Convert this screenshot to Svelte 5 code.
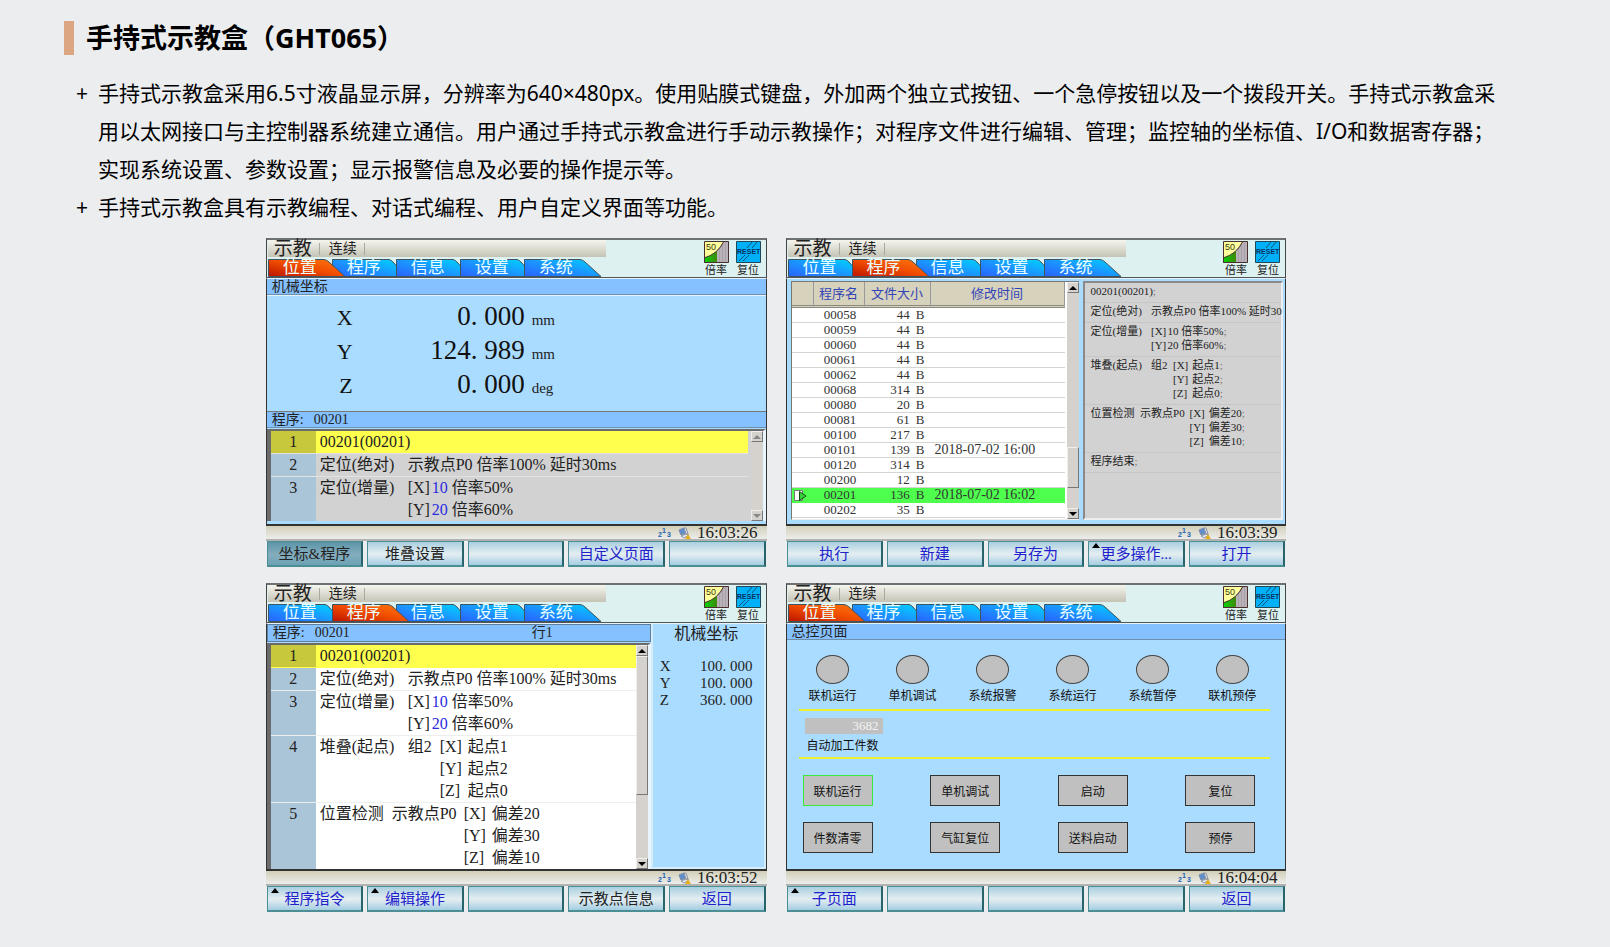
<script lang="ts">
	const tabs = ['位置', '程序', '信息', '设置', '系统'];

	const axes = [
		{ name: 'X', whole: '0', frac: '000', unit: 'mm' },
		{ name: 'Y', whole: '124', frac: '989', unit: 'mm' },
		{ name: 'Z', whole: '0', frac: '000', unit: 'deg' }
	];

	const position = [
		{ name: 'X', whole: '100', frac: '000' },
		{ name: 'Y', whole: '100', frac: '000' },
		{ name: 'Z', whole: '360', frac: '000' }
	];

	// cells: [text, width in half characters]
	type Param = { axis?: string; num?: string; text: string };
	type Line = { cells: [string, number][]; params: Param[]; open?: boolean };
	const program: Line[] = [
		{ cells: [], params: [{ text: '00201(00201)' }] },
		{ cells: [['定位(绝对)', 11]], params: [{ text: '示教点P0 倍率100% 延时30ms' }] },
		{
			cells: [['定位(增量)', 11]],
			params: [
				{ axis: '[X]', num: '10', text: ' 倍率50%' },
				{ axis: '[Y]', num: '20', text: ' 倍率60%' }
			]
		},
		{
			cells: [['堆叠(起点)', 11], ['组2', 4]],
			params: [
				{ axis: '[X]', text: ' 起点1' },
				{ axis: '[Y]', text: ' 起点2' },
				{ axis: '[Z]', text: ' 起点0' }
			]
		},
		{
			cells: [['位置检测', 9], ['示教点P0', 9]],
			params: [
				{ axis: '[X]', text: ' 偏差20' },
				{ axis: '[Y]', text: ' 偏差30' },
				{ axis: '[Z]', text: ' 偏差10' }
			]
		}
	];
	// the preview pane is narrow, its second line stops early
	const preview: Line[] = [
		program[0],
		{ cells: [['定位(绝对)', 11]], params: [{ text: '示教点P0 倍率100% 延时30' }], open: true },
		...program.slice(2),
		{ cells: [], params: [{ text: '程序结束' }] }
	];

	const files = [
		['00058', '44', ''],
		['00059', '44', ''],
		['00060', '44', ''],
		['00061', '44', ''],
		['00062', '44', ''],
		['00068', '314', ''],
		['00080', '20', ''],
		['00081', '61', ''],
		['00100', '217', ''],
		['00101', '139', '2018-07-02 16:00'],
		['00120', '314', ''],
		['00200', '12', ''],
		['00201', '136', '2018-07-02 16:02'],
		['00202', '35', '']
	];
	const current = '00201';

	const lamps = ['联机运行', '单机调试', '系统报警', '系统运行', '系统暂停', '联机预停'];
	const actions = ['联机运行', '单机调试', '启动', '复位', '件数清零', '气缸复位', '送料启动', '预停'];

	type Key = { text: string; dark?: boolean; on?: boolean; more?: boolean };
	const blank: Key = { text: '' };
	const keys1: Key[] = [{ text: '坐标&程序', dark: true, on: true }, { text: '堆叠设置', dark: true }, blank, { text: '自定义页面' }, blank];
	const keys2: Key[] = [{ text: '执行' }, { text: '新建' }, { text: '另存为' }, { text: '更多操作...', more: true }, { text: '打开' }];
	const keys3: Key[] = [{ text: '程序指令', more: true }, { text: '编辑操作', more: true }, blank, { text: '示教点信息', dark: true }, { text: '返回' }];
	const keys4: Key[] = [{ text: '子页面', more: true }, blank, blank, blank, { text: '返回' }];
</script>

{#snippet head(active: number)}
	<header class="head">
		<div class="head-main">
			<div class="mode">
				<b>示教</b><i></i><span>连续</span><i></i>
			</div>
			<nav class="tabs">
				{#each tabs as tab, i}
					<button class="tab" class:active={i === active}>
						<svg width="78" height="18" viewBox="0 0 78 18" aria-hidden="true">
							<path
								fill={i === active ? 'url(#tab-on)' : 'url(#tab-off)'}
								d={i === active || i === 4 ? 'M.5 17.5V.5H56Q59 1 61 3L77 17.5Z' : 'M.5 17.5V.5H57Q59 1 61 3L64.500 7V17.5Z'}
							/>
						</svg>
						<span>{tab}</span>
					</button>
				{/each}
			</nav>
		</div>
		<button class="tool">
			<svg width="25" height="22" viewBox="0 0 25 22" aria-hidden="true">
				<path fill="#ffff9c" d="M0 0h25v22H0z" />
				<path fill="url(#rate)" d="M0 17Q14 13 20 0H25V22H0Z" />
				<path fill="#b9b2b8" d="M13 9Q17 5 20 0H25V22H13Z" />
				<path stroke="#9d959c" stroke-opacity="0.6" d="M15.500 7v15M18.500 3v19M21.500 0v22" />
				<path fill="none" stroke="#4a2f2c" d="M0 17Q14 13 20 0M.5 .5h24v21H.5z" />
				<text x="2" y="9" font-size="9">50</text>
			</svg>
			倍率
		</button>
		<button class="tool">
			<svg width="25" height="22" viewBox="0 0 25 22" aria-hidden="true">
				<path fill="#00b0f8" stroke="#1e4858" d="M.5 .5h24v21H.5z" />
				<path fill="none" stroke="#123c5c" stroke-width="0.8" d="M16 1L11 7M21 1L16 7M9 14L3 20M13 14L7 20" />
				<text class="reset" x="1" y="13" font-size="7">RESET</text>
			</svg>
			复位
		</button>
	</header>
{/snippet}

{#snippet foot(time: string, keys: Key[])}
	<div class="status">
		<svg width="14" height="13" viewBox="0 0 14 13" aria-hidden="true">
			<g fill="#1d5fb4" font-size="7" font-weight="bold">
				<text x="0" y="11">2</text><text x="4" y="7">1</text><text x="9" y="11">3</text>
			</g>
		</svg>
		<svg width="13" height="12" viewBox="0 0 13 12" aria-hidden="true">
			<path fill="#5d8fd0" stroke="#7b8ba5" d="M1 3L6 1L8 6L3 8Z" />
			<path fill="#dfe6f2" stroke="#8b93a3" d="M6 1L8 1L10 7L8 7ZM3 9L8 7L11 8L6 11Z" />
			<path fill="#e8b020" d="M10 7L13 12H7Z" />
		</svg>
		<time>{time}</time>
	</div>
	<div class="keys">
		{#each keys as key}
			<button class="key" class:on={key.on} class:dark={key.dark} class:more={key.more} aria-label={key.text || '空白键'}>{key.text}</button>
		{/each}
	</div>
{/snippet}

{#snippet scrollbar(kind: string)}
	<div class="scroll {kind}">
		<button aria-label="向上"><svg width="8" height="4" viewBox="0 0 8 4"><path d="M0 4L4 0L8 4Z" /></svg></button>
		<div class="track"><div class="thumb"></div></div>
		<button aria-label="向下"><svg width="8" height="4" viewBox="0 0 8 4"><path d="M0 0L4 4L8 0Z" /></svg></button>
	</div>
{/snippet}

{#snippet code(line: Line, end: string)}
	<div class="code">
		{#each line.cells as [text, width]}
			<span style:min-width="{width}ch">{text}</span>
		{/each}
		<div>
			{#each line.params as p}
				<p>{#if p.axis}<span class="axis">{p.axis}</span>{/if}{#if p.num}<em>{p.num}</em>{/if}{p.text}<s>{line.open ? '' : end}</s></p>
			{/each}
		</div>
	</div>
{/snippet}

{#snippet listing(lines: Line[])}
	<ol class="listing">
		{#each lines as line, i}
			<li class:current={i === 0}>
				<span class="no">{i + 1}</span>
				{@render code(line, '')}
			</li>
		{/each}
	</ol>
{/snippet}

<svg class="defs" width="0" height="0" aria-hidden="true">
	<defs>
		<linearGradient id="tab-off" x1="0" y1="1" x2="1" y2="0">
			<stop offset="0" stop-color="#2a62ff" />
			<stop offset="0.5" stop-color="#1a96ff" />
			<stop offset="1" stop-color="#00d2ff" />
		</linearGradient>
		<linearGradient id="tab-on" x1="0" y1="1" x2="1" y2="0">
			<stop offset="0" stop-color="#bc1400" />
			<stop offset="0.5" stop-color="#f04c00" />
			<stop offset="1" stop-color="#ff7a10" />
		</linearGradient>
		<linearGradient id="rate">
			<stop offset="0" stop-color="#00d800" />
			<stop offset="0.6" stop-color="#4a7c10" />
		</linearGradient>
	</defs>
</svg>

<main>
	<h1>手持式示教盒（GHT065）</h1>

	<ul class="intro">
		<li>
			手持式示教盒采用6.5寸液晶显示屏，分辨率为640×480px。使用贴膜式键盘，外加两个独立式按钮、一个急停按钮以及一个拨段开关。手持式示教盒采<br />
			用以太网接口与主控制器系统建立通信。用户通过手持式示教盒进行手动示教操作；对程序文件进行编辑、管理；监控轴的坐标值、I/O和数据寄存器；<br />
			实现系统设置、参数设置；显示报警信息及必要的操作提示等。
		</li>
		<li>手持式示教盒具有示教编程、对话式编程、用户自定义界面等功能。</li>
	</ul>

	<div class="screens">
		<section class="screen">
			{@render head(0)}
			<div class="body">
				<div class="bar">机械坐标</div>
				<div class="axes">
					{#each axes as a}
						<div class="axis-row">
							<span class="name">{a.name}</span>
							<span class="value">{a.whole}<i class="dot">.</i>{a.frac}</span>
							<span class="unit">{a.unit}</span>
						</div>
					{/each}
				</div>
				<div class="bar"><span class="bar-label">程序:</span>00201</div>
				<div class="list-box idle">
					{@render listing(program.slice(0, 3))}
					{@render scrollbar('off gap')}
				</div>
			</div>
			{@render foot('16:03:26', keys1)}
		</section>

		<section class="screen">
			{@render head(1)}
			<div class="body files">
				<div class="file-box">
					<table>
						<thead>
							<tr><th class="mark"></th><th class="id">程序名</th><th class="size">文件大小</th><th>修改时间</th></tr>
						</thead>
						<tbody>
							{#each files as [id, size, time]}
								<tr class:selected={id === current}>
									<td class="mark">
										{#if id === current}
											<svg width="13" height="11" viewBox="0 0 13 11" aria-hidden="true">
												<path fill="#fff" stroke="#777" d="M.5 .5H8.500V10.500H.5Z" />
												<path fill="#35d035" stroke="#144d14" d="M5.500 1.500L12 6L5.500 10.500Z" />
											</svg>
										{/if}
									</td>
									<td class="id">{id}</td>
									<td class="size">{size}<span>B</span></td>
									<td class="time">{time}</td>
								</tr>
							{/each}
						</tbody>
					</table>
					{@render scrollbar('low')}
				</div>
				<div class="preview">
					{#each preview as line}
						{@render code(line, ';')}
					{/each}
				</div>
			</div>
			{@render foot('16:03:39', keys2)}
		</section>

		<section class="screen">
			{@render head(1)}
			<div class="body split">
				<div class="edit">
					<div class="bar"><span class="bar-label">程序:</span>00201<span class="row-no">行1</span></div>
					<div class="list-box">
						{@render listing(program)}
						{@render scrollbar('high')}
					</div>
				</div>
				<aside>
					<h2>机械坐标</h2>
					{#each position as p}
						<div class="pos"><span>{p.name}</span><span>{p.whole}<i class="dot">.</i>{p.frac}</span></div>
					{/each}
				</aside>
			</div>
			{@render foot('16:03:52', keys3)}
		</section>

		<section class="screen">
			{@render head(0)}
			<div class="body">
				<div class="bar">总控页面</div>
				<div class="control">
					<div class="lamps">
						{#each lamps as lamp}
							<div class="lamp"><i></i>{lamp}</div>
						{/each}
					</div>
					<div class="counter">
						<input id="count" value="3682" readonly />
						<label for="count">自动加工件数</label>
					</div>
					<div class="actions">
						{#each actions as action, i}
							<button class:lit={i === 0}>{action}</button>
						{/each}
					</div>
				</div>
			</div>
			{@render foot('16:04:04', keys4)}
		</section>
	</div>
</main>

<style>
	:global(body) {
		margin: 0;
		background: #ecedef;
	}

	.defs {
		position: absolute;
	}

	main {
		padding: 21px 0 32px;
		color: #000;
		font-family: "Noto Sans", "Noto Sans CJK SC", sans-serif;
	}

	h1 {
		margin: 0 0 0 64px;
		padding-left: 12px;
		border-left: 10px solid #dba681;
		font-size: 27px;
		line-height: 34px;
	}

	.intro {
		margin: 19px 60px 12px 76px;
		padding: 0;
		list-style: none;
		font-size: 21px;
		line-height: 38px;
		white-space: nowrap;
	}
	.intro li {
		display: flow-root;
		padding-left: 22px;
	}
	.intro li::before {
		content: "+";
		float: left;
		margin-left: -22px;
	}

	button {
		margin: 0;
		padding: 0;
		border: 0;
		background: none;
		color: inherit;
		font: inherit;
	}

	p {
		margin: 0;
	}

	i, em, s {
		font-style: normal;
		text-decoration: none;
	}

	.screens {
		display: grid;
		grid-template-columns: repeat(2, minmax(0, 1fr));
		gap: 16px 19px;
		padding: 0 20.1% 0 16.5%;
		font-family: "Liberation Serif", "Noto Sans CJK SC", serif;
		color: #222;
	}

	/* header with mode line and tabs */
	.head {
		display: flex;
		box-sizing: border-box;
		height: 40px;
		padding: 0 5px 0 1px;
		border-top: 2px solid #6c7274;
		border-bottom: 1px solid #555;
		border-left: 1px solid #444;
		border-right: 1px solid #444;
		background: #ddf1f0;
		gap: 7px;
	}
	.head-main {
		flex: 1;
	}
	.mode {
		display: flex;
		align-items: center;
		width: 338px;
		height: 17px;
		margin-bottom: 2px;
		padding-left: 6px;
		box-sizing: border-box;
		gap: 7px;
		background: linear-gradient(#f5f5ee, #c5c3b5);
		font-size: 14px;
		line-height: 17px;
	}
	.mode b {
		font-size: 19px;
		font-weight: normal;
	}
	.mode i {
		width: 1px;
		height: 12px;
		margin-right: 2px;
		background: #aaa99f;
	}
	.tabs {
		display: flex;
	}
	.tab {
		position: relative;
		width: 64px;
		height: 18px;
		color: #eaffff;
		font-size: 17px;
		line-height: 17px;
	}
	.tab.active {
		z-index: 1;
	}
	.tab svg {
		position: absolute;
		left: 0;
		top: 0;
		stroke: #3c5560;
	}
	.tab span {
		position: relative;
		display: block;
		height: 18px;
	}
	.tool {
		display: flex;
		flex-direction: column;
		align-items: center;
		gap: 1px;
		padding-top: 1px;
		font-size: 11px;
		line-height: 13px;
	}
	.tool svg {
		flex: none;
	}
	.tool svg text {
		font-family: "Liberation Sans", sans-serif;
		fill: #3a3a10;
	}
	.tool svg .reset {
		font-weight: bold;
		fill: #0a3060;
	}

	/* bottom of each screen */
	.status {
		display: flex;
		align-items: center;
		justify-content: flex-end;
		gap: 6px;
		height: 13px;
		padding-right: 9px;
		border-bottom: 2px solid #b2b2b0;
		background: linear-gradient(#d2cfb8, #ecedeb);
		font-size: 17px;
		line-height: 13px;
	}
	.status svg {
		overflow: visible;
	}
	.status text {
		font-family: "Liberation Sans", sans-serif;
	}
	.keys {
		display: grid;
		grid-template-columns: repeat(5, 1fr);
		gap: 4px;
		padding: 0 1px;
	}
	.key {
		position: relative;
		height: 26px;
		padding-top: 2px;
		border: 1px solid #4b8f94;
		border-right: 2px solid #27656a;
		border-bottom: 2px solid #4b8f94;
		background: linear-gradient(#a9cfdf, #e2edf1 50%, #dce9ef 60%, #a3cde2);
		color: #2020cc;
		font-size: 15px;
		line-height: 21px;
		white-space: nowrap;
	}
	.key.dark {
		color: #222;
	}
	.key.on {
		background: linear-gradient(#5b95a8, #84adbd 55%, #6aa2b5);
	}
	.more::before {
		content: "";
		position: absolute;
		left: 3px;
		top: 1px;
		border: 4px solid transparent;
		border-top: 0;
		border-bottom: 5px solid #000;
	}

	.body {
		display: flex;
		flex-direction: column;
		box-sizing: border-box;
		height: 248px;
		border: 1px solid #333;
		border-top-color: #e4f4ff;
		border-bottom-width: 2px;
		background: #aadcff;
	}
	.bar {
		display: flex;
		padding: 0 5px;
		border-bottom: 1px solid #6f8fae;
		background: #85c1ff;
		font-size: 14px;
		line-height: 15px;
	}
	.bar-label {
		width: 42px;
	}
	.row-no {
		margin-left: 182px;
	}

	.axes {
		flex: 1;
		padding-top: 3px;
		border-top: 1px solid #e4f4ff;
		border-bottom: 1px solid #777;
	}
	.axis-row {
		display: grid;
		grid-template-columns: 86px 172px 1fr;
		align-items: baseline;
		height: 34px;
		line-height: 34px;
	}
	.name {
		color: #111;
		font-size: 22px;
		text-align: right;
	}
	.value {
		color: #111;
		font-size: 27px;
		text-align: right;
	}
	.dot {
		display: inline-block;
		width: 1ch;
		text-align: left;
	}
	.unit {
		padding-left: 7px;
		font-size: 15px;
	}

	/* program listing */
	.list-box {
		display: flex;
		flex: 0 1 auto;
		min-height: 0;
		margin-top: 1px;
		border: 2px solid #6b6b6b;
		border-left-width: 4px;
		border-right: 3px solid #e9f5fc;
		border-bottom: 0;
		background: #fff;
	}
	.idle {
		margin-bottom: 3px;
		background: #d2d2d2;
	}
	.listing {
		flex: 1;
		margin: 0;
		padding: 0;
		overflow: hidden;
		list-style: none;
		font-size: 16px;
		line-height: 22px;
	}
	.listing li {
		display: flex;
		border-bottom: 1px solid #eee;
		white-space: pre;
	}
	.idle .listing li {
		border-color: #e2e2e2;
	}
	.idle .listing li:last-child {
		border: 0;
	}
	.no {
		width: 45px;
		margin-right: 4px;
		background: #aac5d8;
		text-align: center;
	}
	.listing .current {
		border-color: #ffff4e;
		background: #ffff4e;
	}
	.current .no {
		background: #c8c83c;
	}
	.code {
		display: flex;
		white-space: pre;
	}
	.axis {
		display: inline-block;
		min-width: 3ch;
	}
	.listing em {
		color: #2a2ae0;
	}
	s {
		color: #777;
	}

	.scroll {
		display: flex;
		flex-direction: column;
		flex: none;
		width: 12px;
		background: #d5d1cc;
	}
	.scroll.gap {
		margin-left: 3px;
	}
	.scroll button {
		display: flex;
		align-items: center;
		justify-content: center;
		height: 11px;
		border: 1px solid #f0eeea;
		border-right-color: #777;
		border-bottom-color: #777;
	}
	.off path {
		fill: #888;
	}
	.track {
		display: flex;
		flex-direction: column;
		flex: 1;
	}
	.thumb {
		border: 1px solid #f0eeea;
		border-right-color: #777;
		border-bottom-color: #777;
	}
	.off .thumb {
		display: none;
	}
	.high .thumb {
		height: 68%;
	}
	.low .thumb {
		height: 18%;
		margin-top: 154px;
	}

	/* file list */
	.files {
		flex-direction: row;
		gap: 4px;
		padding: 2px 2px 4px 4px;
	}
	.file-box {
		display: flex;
		flex: 0 0 288px;
		box-sizing: border-box;
		border: 1px solid #777;
		border-right: 0;
		border-bottom-color: #eee;
		background: #fff;
	}
	table {
		flex: 1;
		align-self: flex-start;
		margin-right: 2px;
		border-spacing: 0;
		table-layout: fixed;
		font-size: 13px;
		line-height: 14px;
		color: #333;
	}
	th {
		height: 23px;
		padding: 0;
		border-right: 1px solid #999;
		border-bottom: 3px double #8c8a80;
		background: #d6d2bc;
		color: #3344b8;
		font-weight: normal;
		line-height: 22px;
	}
	td {
		height: 14px;
		padding: 0;
		border-bottom: 1px solid #d6d6d0;
	}
	.mark {
		width: 21px;
	}
	td.mark svg {
		display: block;
		margin-left: 2px;
	}
	.id {
		width: 49px;
	}
	td.id {
		padding-left: 2px;
		text-align: center;
	}
	.size {
		width: 65px;
	}
	td.size {
		padding-right: 6px;
		text-align: right;
		width: 59px;
	}
	.size span {
		margin-left: 6px;
	}
	.time {
		padding-left: 4px;
		font-size: 14px;
		white-space: nowrap;
	}
	.selected td {
		border-color: #4eff4e;
		background: #4eff4e;
	}
	.preview {
		flex: 1;
		min-width: 0;
		border: 2px solid #8a8a8a;
		border-right-color: #eee;
		border-bottom-color: #eee;
		background: #d2d2d2;
		font-size: 11px;
		line-height: 14px;
	}
	.preview .code {
		padding: 1px 0 4px 6px;
		border-bottom: 1px solid #c6c6c6;
	}

	/* editor with position panel */
	.split {
		flex-direction: row;
	}
	.edit {
		display: flex;
		flex: 1;
		flex-direction: column;
		min-width: 0;
	}
	.edit .bar {
		border: 1px solid #5f7f9e;
		line-height: 16px;
	}
	.edit .list-box {
		flex: 1;
	}
	aside {
		flex: 0 0 23%;
		box-sizing: border-box;
		padding: 0 11px 0 7px;
		border: 2px solid #d4edfc;
		border-top: 0;
	}
	h2 {
		margin: 0 0 14px;
		font-size: 16px;
		font-weight: normal;
		line-height: 20px;
		text-align: center;
	}
	.pos {
		display: flex;
		justify-content: space-between;
		font-size: 15px;
		line-height: 17px;
	}

	/* control page */
	.control {
		padding: 15px 15px 0 12px;
		color: #111;
		font-size: 12px;
	}
	.lamps {
		display: flex;
		justify-content: space-between;
		padding: 0 14px 5px 10px;
		border-bottom: 2px solid #eaf234;
	}
	.lamp {
		display: flex;
		flex-direction: column;
		align-items: center;
		gap: 5px;
		line-height: 15px;
	}
	.lamp i {
		box-sizing: border-box;
		width: 33px;
		height: 29px;
		border: 1px solid #444;
		border-radius: 50%;
		background: #c0c0c0;
	}
	.counter {
		display: flex;
		flex-direction: column;
		align-items: flex-start;
		gap: 5px;
		padding: 7px 6px 3px;
		border-bottom: 2px solid #eaf234;
		line-height: 15px;
	}
	.counter input {
		box-sizing: border-box;
		width: 78px;
		height: 16px;
		padding: 0 4px;
		border: 0;
		background: #c0c0c0;
		color: #f4f4f4;
		font: inherit;
		font-size: 13px;
		text-align: right;
	}
	.counter label {
		padding-left: 2px;
	}
	.actions {
		display: grid;
		grid-template-columns: repeat(4, 70px);
		justify-content: space-between;
		gap: 16px;
		padding: 16px 15px 0 4px;
	}
	.actions button {
		height: 31px;
		border: 1px solid #333;
		background: #c0c0c0;
	}
	.actions .lit {
		border-color: #3ce83c;
	}
</style>
